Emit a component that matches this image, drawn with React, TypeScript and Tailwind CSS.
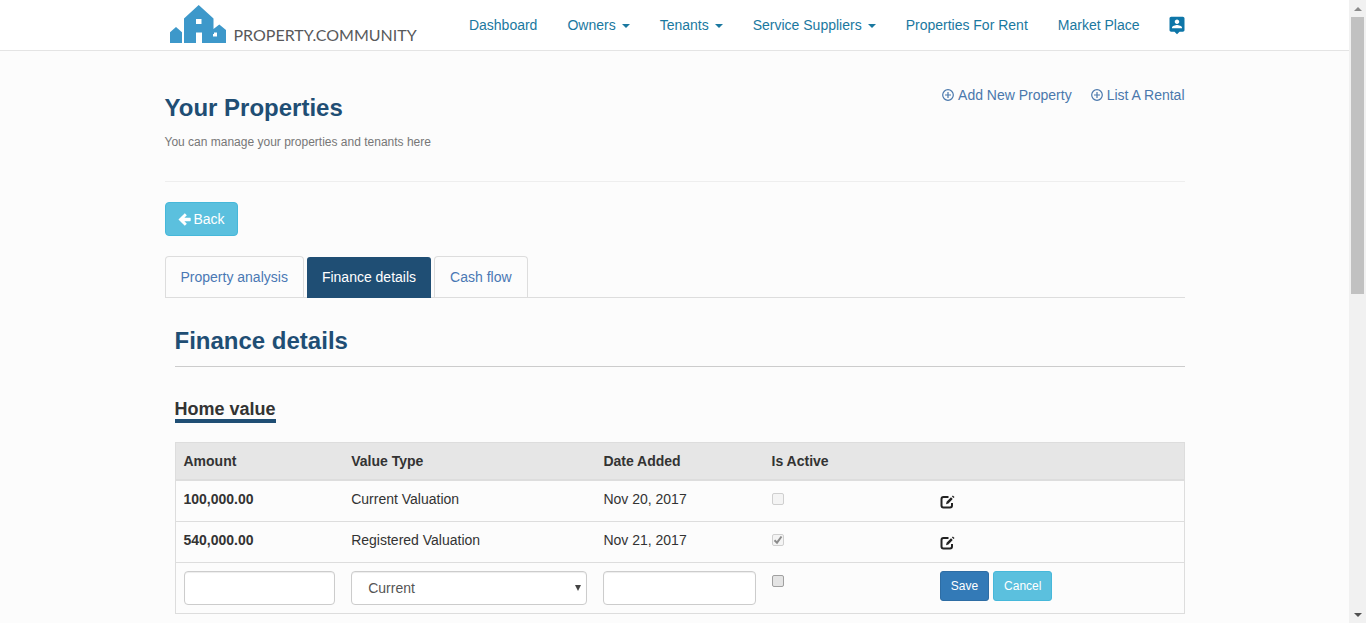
import React, { useState } from "react";

const navItems = [
  { label: "Dashboard" },
  { label: "Owners", menu: true },
  { label: "Tenants", menu: true },
  { label: "Service Suppliers", menu: true },
  { label: "Properties For Rent" },
  { label: "Market Place" },
];

const tabs = ["Property analysis", "Finance details", "Cash flow"];

const homeValues = [
  { amount: "100,000.00", type: "Current Valuation", date: "Nov 20, 2017", active: false },
  { amount: "540,000.00", type: "Registered Valuation", date: "Nov 21, 2017", active: true },
];

function LogoMark() {
  return (
    <svg viewBox="0 0 56 38" className="h-[38px] w-14 shrink-0" fill="#3d98ca" aria-hidden="true">
      <path d="M0 38V27.300L6 22l6 5.300V38z" />
      <path
        fillRule="evenodd"
        d="M14 38V13.500L28.700 0 43.500 13.500V24l5.800-4.500L56 25V38H32V27.500h-6V38zM26 14v5h5.500v-5zM44 27.500v1.500h-1v2.500h4v-4z"
      />
    </svg>
  );
}

function PersonPin() {
  return (
    <svg viewBox="0 0 24 24" className="size-5" fill="#0e76a8" aria-hidden="true">
      <path d="M19 2H5c-1.110 0-2 .9-2 2v14c0 1.100.89 2 2 2h4l3 3 3-3h4c1.100 0 2-.9 2-2V4c0-1.100-.9-2-2-2zm-7 3.300c1.490 0 2.700 1.210 2.700 2.700s-1.210 2.700-2.700 2.700S9.300 9.490 9.300 8s1.210-2.700 2.700-2.700zM18 16H6v-.9c0-2 4-3.100 6-3.100s6 1.100 6 3.100z" />
    </svg>
  );
}

function PlusCircle() {
  return (
    <svg viewBox="0 0 12 12" className="size-3" fill="none" stroke="currentColor" strokeWidth="1.200" aria-hidden="true">
      <circle cx="6" cy="6" r="5.300" />
      <path d="M6 3v6M3 6h6" />
    </svg>
  );
}

function ArrowLeft() {
  return (
    <svg viewBox="0 0 14 14" className="size-[13px]" fill="currentColor" aria-hidden="true">
      <path d="M7.300.3 9.500 2.500 6.900 5.200H13q.7 0 .7.700v2.200q0 .7-.7.700H6.900L9.500 11.500 7.300 13.700.5 7z" />
    </svg>
  );
}

function EditIcon() {
  return (
    <svg viewBox="0 0 15 14" className="h-[14px] w-[15px]" aria-hidden="true">
      <path
        d="M8.500 2H3.500Q1.500 2 1.500 4v6.500q0 2 2 2h6.500q2 0 2-2V8"
        fill="none"
        stroke="#222"
        strokeWidth="2"
      />
      <path d="M6 9.200 6.600 6.800 11 2.300l1.700 1.700L8.400 8.500z" fill="#222" />
      <path d="M11.900 1.500 12.800.6l1.700 1.500-.9 1z" fill="#222" />
    </svg>
  );
}

function CheckBox({ label, defaultChecked, disabled }: { label: string; defaultChecked?: boolean; disabled?: boolean }) {
  return (
    <span className="relative block size-3">
      <input
        type="checkbox"
        aria-label={label}
        defaultChecked={defaultChecked}
        disabled={disabled}
        className="peer block size-3 appearance-none rounded-xs border border-[#a0a0a0] bg-[#e4e4e4] disabled:border-[#cfcfcf] disabled:bg-[#f4f4f4]"
      />
      <svg
        viewBox="0 0 12 12"
        className="pointer-events-none absolute inset-0 hidden size-3 peer-checked:block"
        fill="none"
        stroke="#8c8c8c"
        strokeWidth="2"
        aria-hidden="true"
      >
        <path d="M2.500 6.200 5 8.700 9.500 2.500" />
      </svg>
    </span>
  );
}

function ScrollTrack() {
  return (
    <div className="sticky top-0 flex h-screen w-[17px] shrink-0 flex-col items-center bg-[#f1f1f1]" aria-hidden="true">
      <div className="flex h-[17px] items-center">
        <svg viewBox="0 0 8 4" className="h-1 w-2" fill="#8a8a8a">
          <path d="M0 4 4 0l4 4z" />
        </svg>
      </div>
      <div className="flex w-full flex-1 flex-col items-center">
        <div className="h-[47%] w-[13px] bg-[#c1c1c1]" />
      </div>
      <div className="flex h-[17px] items-center">
        <svg viewBox="0 0 8 4" className="h-1 w-2" fill="#505050">
          <path d="M0 0l4 4 4-4z" />
        </svg>
      </div>
    </div>
  );
}

const field =
  "block h-[34px] w-full rounded-sm border border-[#ccc] bg-white px-3 text-sm text-[#555] shadow-[inset_0_1px_1px_rgba(0,0,0,0.075)]";

export default function App() {
  const [tab, setTab] = useState("Finance details");

  return (
    <div className="flex min-h-screen bg-[#fcfcfc] font-['Liberation_Sans',Arial,sans-serif] text-sm leading-5 text-[#333]">
      <div className="min-w-0 flex-1">
        <header className="border-b border-[#e4e4e4] bg-white">
          <div className="mx-auto flex h-[50px] max-w-[1020px] items-center">
            <a href="#" className="flex items-end gap-2 pb-0.5 pl-[5px]">
              <LogoMark />
              <span className="font-[Lato,'Liberation_Sans',sans-serif] text-base leading-4 text-[#58595b]">
                PROPERTY.COMMUNITY
              </span>
            </a>
            <nav className="ml-auto flex items-center gap-[30px] text-[#1a78a0]">
              {navItems.map((item) => (
                <a key={item.label} href="#" className="flex items-center gap-1.5 whitespace-nowrap">
                  {item.label}
                  {item.menu && (
                    <svg viewBox="0 0 8 4" className="mt-0.5 h-1 w-2" fill="currentColor" aria-hidden="true">
                      <path d="M0 0h8L4 4z" />
                    </svg>
                  )}
                </a>
              ))}
              <a href="#" aria-label="Account" className="-mr-0.5 -ml-[3px]">
                <PersonPin />
              </a>
            </nav>
          </div>
        </header>

        <main className="mx-auto max-w-[1020px]">
          <div className="flex justify-between border-b border-[#eee] pt-[34px] pb-[29px]">
            <div>
              <h1 className="pt-[7px] text-2xl leading-8 font-bold text-[#1f4e74]">Your Properties</h1>
              <p className="mt-2 text-xs leading-5 text-[#777]">You can manage your properties and tenants here</p>
            </div>
            <div className="flex h-5 gap-[19px] text-[#4a78ac]">
              {["Add New Property", "List A Rental"].map((label) => (
                <a key={label} href="#" className="flex items-center gap-1">
                  <PlusCircle />
                  {label}
                </a>
              ))}
            </div>
          </div>

          <button
            type="button"
            className="mt-5 flex h-[34px] items-center gap-[3px] rounded-sm border border-[#46b8da] bg-[#5bc0de] px-3 text-white"
          >
            <ArrowLeft />
            Back
          </button>

          <div role="tablist" className="mt-5 flex gap-0.5 border-b border-[#ddd]">
            {tabs.map((name) => (
              <button
                key={name}
                type="button"
                role="tab"
                aria-selected={name === tab}
                onClick={() => setTab(name)}
                className={
                  name === tab
                    ? "-mb-px h-[42px] rounded-t-sm border border-b-0 border-transparent bg-[#1f4e74] bg-clip-padding px-[15px] pb-px text-white"
                    : "h-[41px] rounded-t-sm border border-b-0 border-[#ddd] px-[15px] text-[#4a78b4]"
                }
              >
                {name}
              </button>
            ))}
          </div>

          <section className="pl-2.5">
            <h2 className="border-b border-[#ccc] pt-7 pb-2.5 text-2xl leading-[30px] font-bold text-[#1f4e74]">
              Finance details
            </h2>
            <h3 className="mt-8 inline-block border-b-4 border-[#1f4e74] text-lg leading-5 font-bold">Home value</h3>

            <table className="mt-[19px] w-full table-fixed border-collapse border border-[#ddd]">
              <colgroup>
                <col className="w-1/6" />
                <col className="w-1/4" />
                <col className="w-1/6" />
                <col className="w-1/6" />
                <col className="w-1/4" />
              </colgroup>
              <thead>
                <tr className="bg-[#e6e6e6] text-left">
                  {["Amount", "Value Type", "Date Added", "Is Active"].map((head) => (
                    <th key={head} className="border-b-2 border-[#ddd] p-2 font-bold">
                      {head}
                    </th>
                  ))}
                  <td className="border-b-2 border-[#ddd] p-2" />
                </tr>
              </thead>
              <tbody>
                {homeValues.map((row) => (
                  <tr key={row.date} className="h-[41px] align-top *:border-b *:border-[#ddd]">
                    <td className="p-2 font-bold">{row.amount}</td>
                    <td className="p-2">{row.type}</td>
                    <td className="p-2">{row.date}</td>
                    <td className="px-2 py-3">
                      <CheckBox label={`${row.type} is active`} defaultChecked={row.active} disabled />
                    </td>
                    <td className="px-2 pt-[14px]">
                      <button type="button" aria-label={`Edit ${row.type}`} className="block">
                        <EditIcon />
                      </button>
                    </td>
                  </tr>
                ))}
                <tr className="align-top">
                  <td className="p-2">
                    <input type="text" aria-label="Amount" className={field} />
                  </td>
                  <td className="p-2">
                    <div className="relative">
                      <select aria-label="Value Type" className={`${field} appearance-none pl-4`}>
                        <option>Current</option>
                        <option>Registered</option>
                      </select>
                      <svg
                        viewBox="0 0 6 6"
                        className="pointer-events-none absolute top-[14px] right-[6px] size-1.5"
                        fill="#444"
                        aria-hidden="true"
                      >
                        <path d="M0 0h6L3 6z" />
                      </svg>
                    </div>
                  </td>
                  <td className="p-2">
                    <input type="text" aria-label="Date Added" className={field} />
                  </td>
                  <td className="px-2 py-3">
                    <CheckBox label="Is Active" />
                  </td>
                  <td className="p-2">
                    <div className="flex gap-1 text-xs text-white">
                      <button type="button" className="h-[30px] rounded-[3px] border border-[#2e6da4] bg-[#337ab7] px-2.5">
                        Save
                      </button>
                      <button type="button" className="h-[30px] rounded-[3px] border border-[#46b8da] bg-[#5bc0de] px-2.5">
                        Cancel
                      </button>
                    </div>
                  </td>
                </tr>
              </tbody>
            </table>
          </section>
        </main>
      </div>
      <ScrollTrack />
    </div>
  );
}
